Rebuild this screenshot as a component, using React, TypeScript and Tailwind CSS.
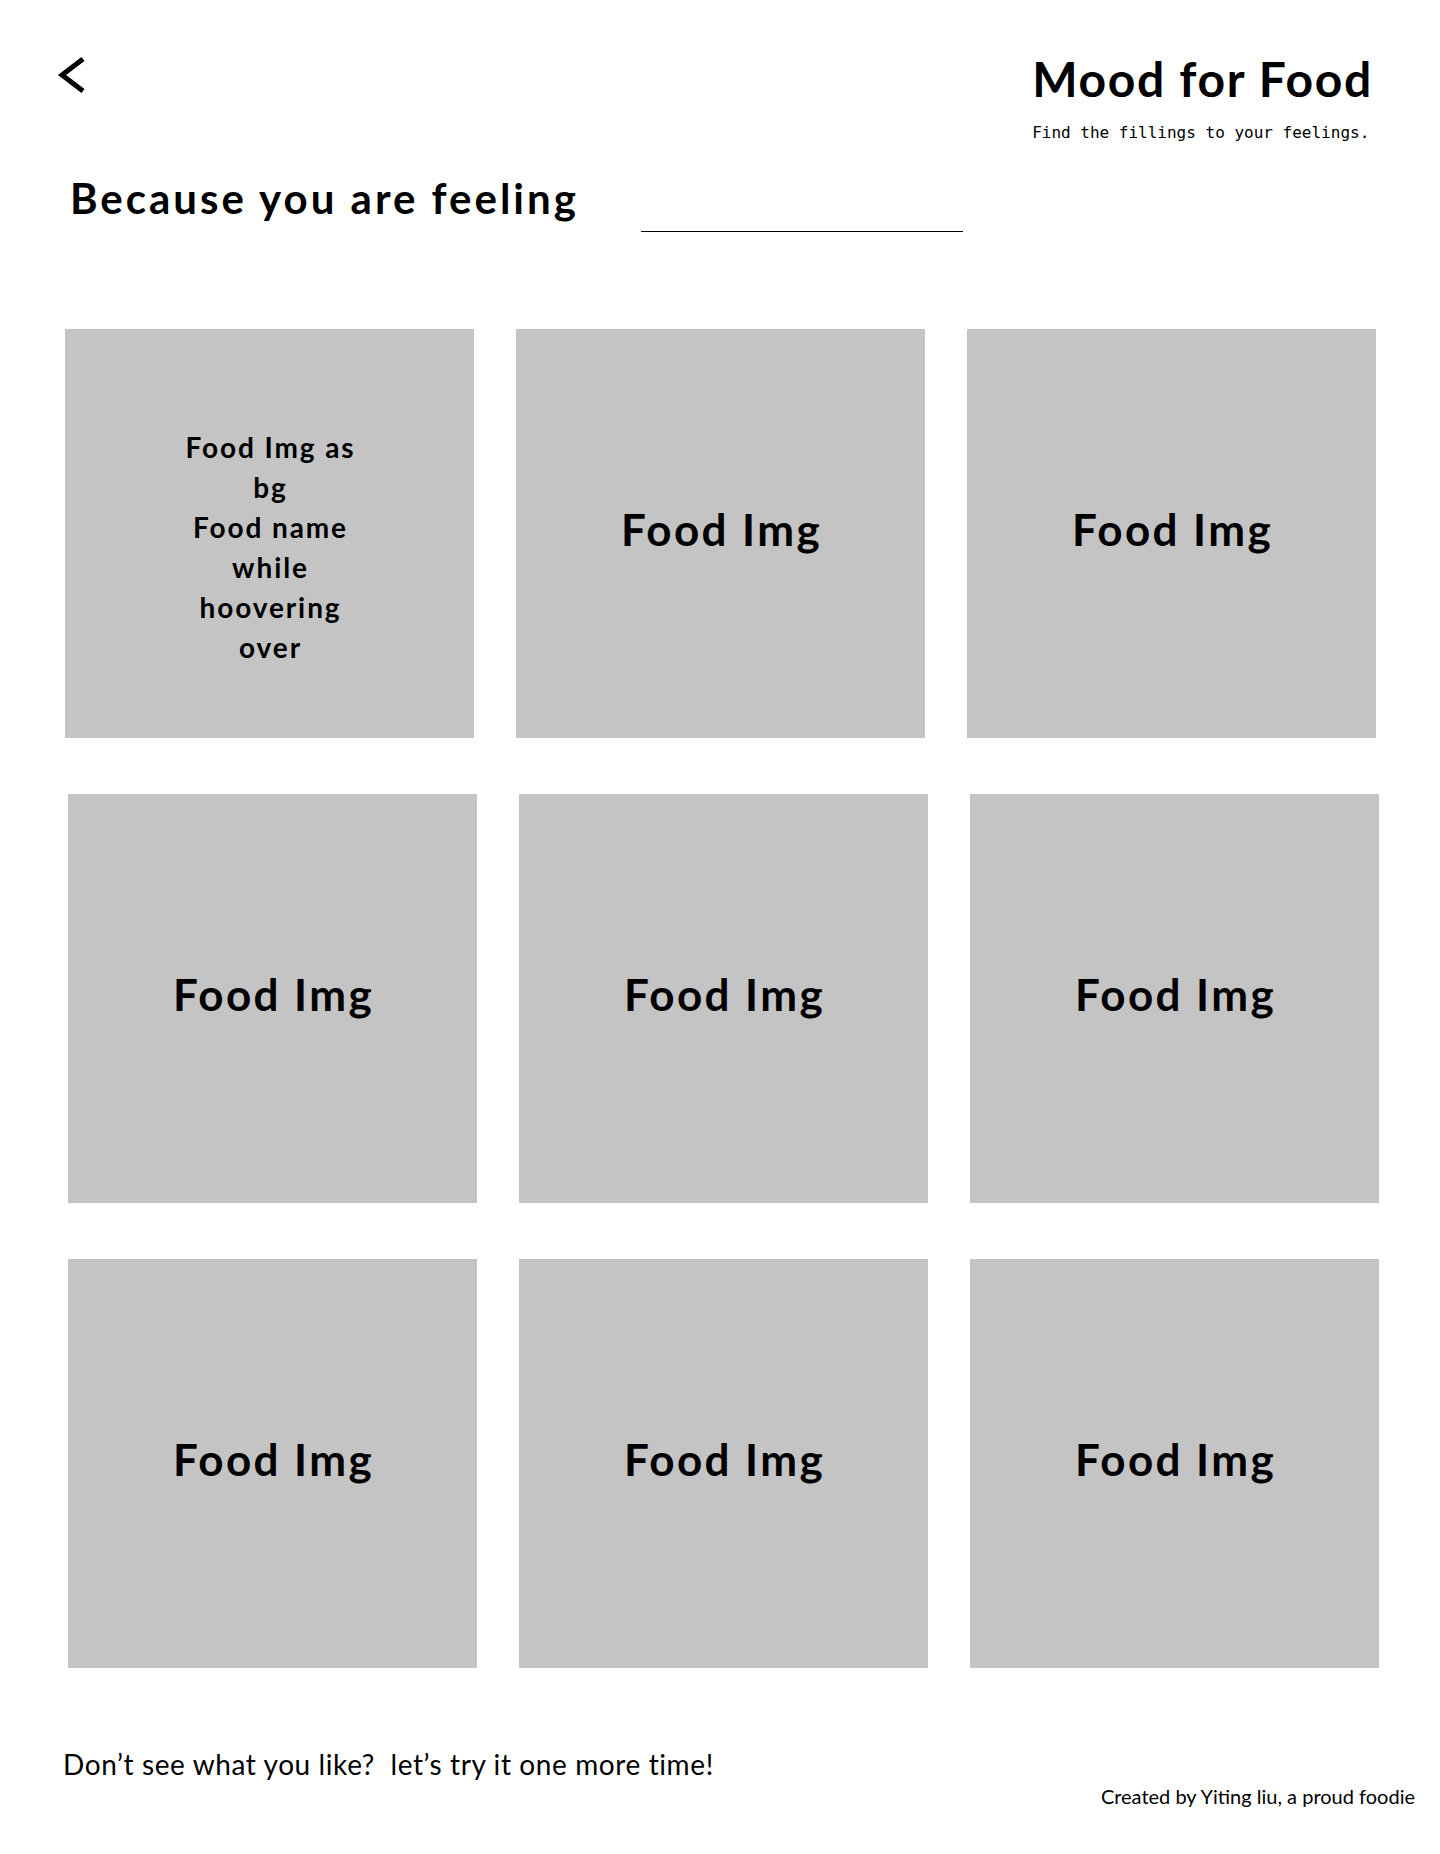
import React from 'react';

const rows = [
  { offset: 'ml-[65px]', items: ['hover', 'img', 'img'] },
  { offset: 'ml-[68px]', items: ['img', 'img', 'img'] },
  { offset: 'ml-[68px]', items: ['img', 'img', 'img'] },
];

function FoodTile({ kind }: { kind: string }) {
  if (kind === 'hover') {
    return (
      <div className="flex h-[409px] w-[409px] items-center justify-center bg-[#c4c4c4]">
        <p className="pl-[2px] pt-[26px] text-center text-[28px] font-bold leading-[40px] tracking-[1.9px] text-black">
          Food Img as
          <br />
          bg
          <br />
          Food name
          <br />
          while
          <br />
          hoovering
          <br />
          over
        </p>
      </div>
    );
  }
  return (
    <div className="flex h-[409px] w-[409px] items-center justify-center bg-[#c4c4c4]">
      <span className="-mt-[10px] pl-[2px] text-[44px] font-bold leading-none tracking-[2.4px] text-black">
        Food Img
      </span>
    </div>
  );
}

export default function App() {
  return (
    <div className="relative h-[1854px] w-[1440px] overflow-hidden bg-white font-['Lato',sans-serif] text-black">
      <header className="flex items-start justify-between pl-[56px] pr-[67px] pt-[55px]">
        <button className="mt-[1px]" aria-label="Back">
          <svg width="30" height="38" viewBox="0 0 30 38" fill="none">
            <polyline points="27,3 6,19 27,35" stroke="black" strokeWidth="5" strokeLinejoin="miter" />
          </svg>
        </button>
        <div className="flex flex-col">
          <h1 className="text-[48px] font-bold leading-none tracking-[1.7px]">Mood for Food</h1>
          <p className="mt-[22px] font-['DejaVu_Sans_Mono',monospace] text-[16px] leading-none">
            Find the fillings to your feelings.
          </p>
        </div>
      </header>

      <section className="mt-[36px] flex items-end pl-[70px]">
        <h2 className="text-[42px] font-bold leading-none tracking-[3px]">Because you are feeling</h2>
        <div className="mb-[-13px] ml-[62px] h-px w-[322px] bg-black" />
      </section>

      <main className="mt-[110px] flex flex-col gap-[56px]">
        {rows.map((row, i) => (
          <div key={i} className={`flex gap-[42px] ${row.offset}`}>
            {row.items.map((kind, j) => (
              <FoodTile key={j} kind={kind} />
            ))}
          </div>
        ))}
      </main>

      <footer className="mt-[82px] pl-[63px] pr-[25px]">
        <p className="text-[28px] leading-none tracking-[0.6px]">
          Don’t see what you like?&nbsp; let’s try it one more time!
        </p>
        <p className="mt-[8px] text-right text-[20px] leading-none">Created by Yiting liu, a proud foodie</p>
      </footer>
    </div>
  );
}
